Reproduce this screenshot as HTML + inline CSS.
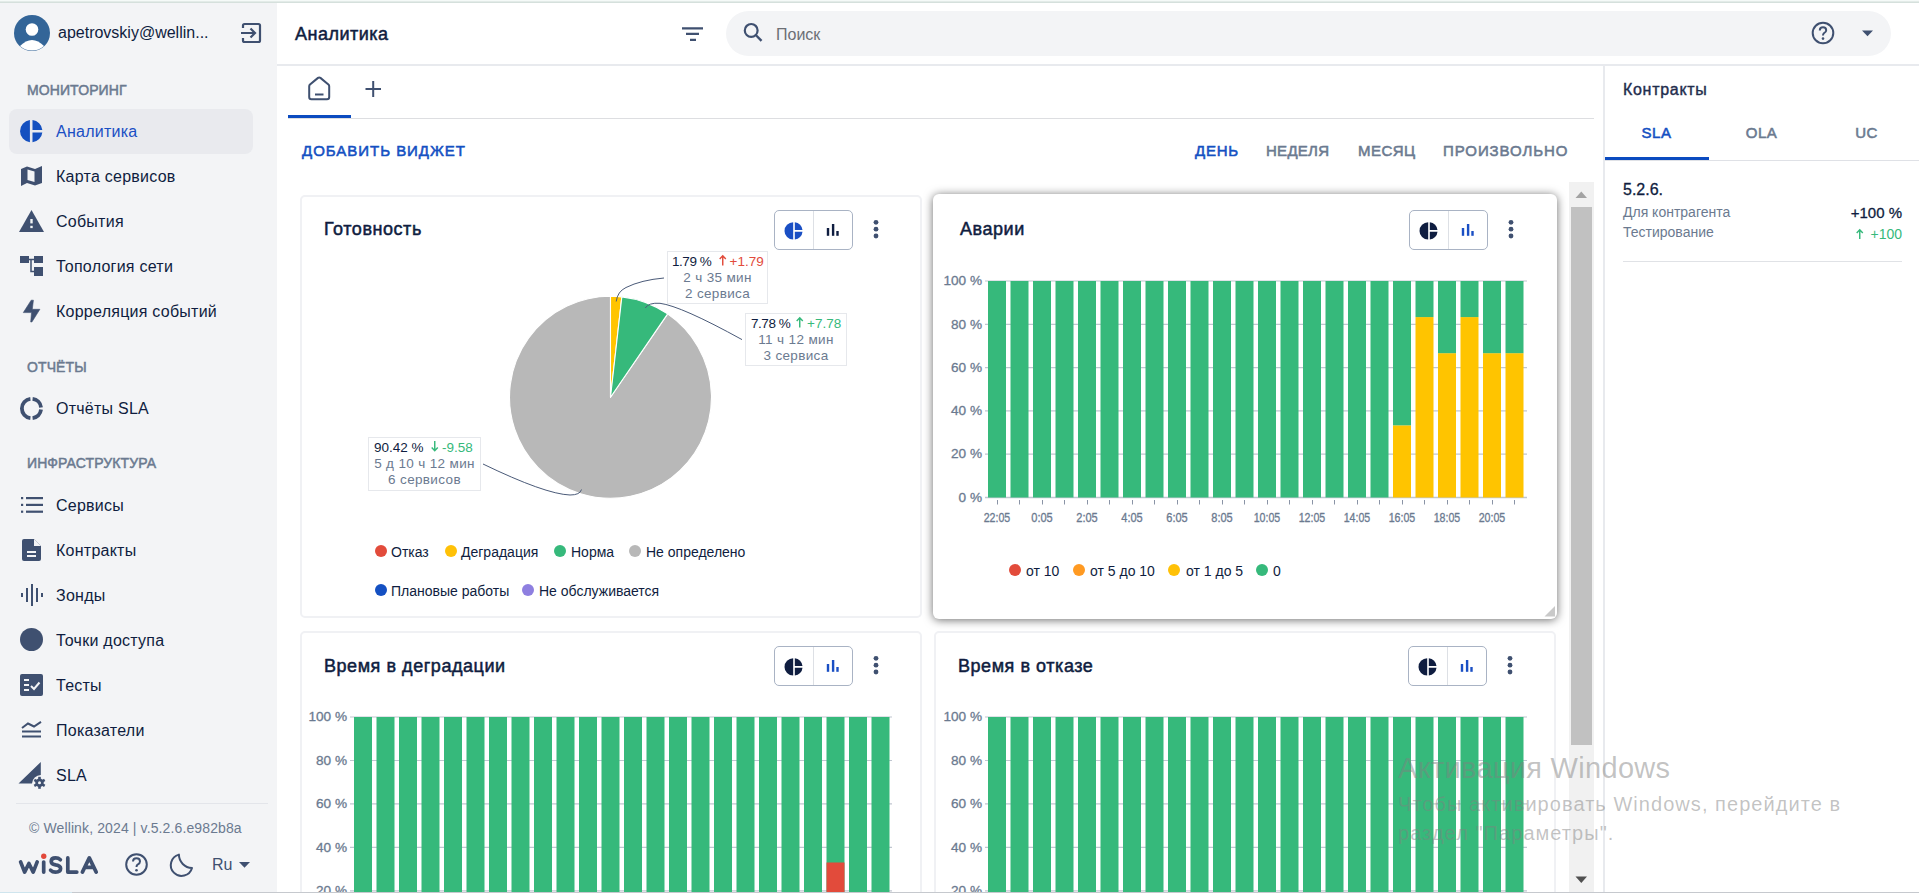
<!DOCTYPE html>
<html><head><meta charset="utf-8">
<style>
*{box-sizing:border-box;margin:0;padding:0}
html,body{width:1919px;height:893px;overflow:hidden;background:#fff;font-family:"Liberation Sans",sans-serif;color:#0f1d40}
.a{position:absolute}
.t{position:absolute;white-space:nowrap;line-height:1}
svg{position:absolute;overflow:visible}
#top{left:0;top:0;width:1919px;height:3px;background:linear-gradient(#f5faf8 0,#f5faf8 1px,#e3ebe8 1px,#e3ebe8 2px,#d5e0dc 2px)}
#side{left:0;top:3px;width:277px;height:890px;background:#f3f4f6}
.nav{font-size:16px;color:#0f1d40;left:56px;letter-spacing:0.25px}
.sec{font-size:14px;font-weight:400;-webkit-text-stroke:0.5px #6b7a90;color:#6b7a90;left:27px;letter-spacing:0.1px}
.ic{fill:#3f5070}
#bottomline{left:0;top:892px;width:1919px;height:1px;background:linear-gradient(90deg,#cfe5ee 0,#cfe5ee 72px,#c6c9ce 72px)}
</style></head><body>
<div id="top" class="a"></div>
<div id="side" class="a"></div>

<!-- sidebar user -->
<svg style="left:14px;top:15px" width="36" height="36" viewBox="0 0 36 36">
  <circle cx="18" cy="18" r="18" fill="#336598"/>
  <circle cx="18" cy="14.5" r="6.3" fill="#fff"/>
  <path d="M6 31 Q18 19 30 31 A18 18 0 0 1 6 31Z" fill="#fff"/>
</svg>
<div class="t" style="left:58px;top:25px;font-size:16px">apetrovskiy@wellin...</div>
<svg style="left:240px;top:22px" width="24" height="22" viewBox="0 0 24 22">
  <path d="M3 6 V3.5 A1.5 1.5 0 0 1 4.5 2 H18.5 A1.5 1.5 0 0 1 20 3.5 V18.5 A1.5 1.5 0 0 1 18.5 20 H4.5 A1.5 1.5 0 0 1 3 18.5 V16" fill="none" stroke="#3f5070" stroke-width="2.2"/>
  <path d="M1 11 H14.5 M10.5 6.5 L15 11 L10.5 15.5" fill="none" stroke="#3f5070" stroke-width="2.2"/>
</svg>

<div class="t sec" style="top:83px">МОНИТОРИНГ</div>
<div class="a" style="left:9px;top:109px;width:244px;height:45px;background:#e9eaee;border-radius:8px"></div>
<svg style="left:20.4px;top:119.8px" width="22.4" height="22.4" viewBox="0 0 22.4 22.4"><path d="M9.9 0.08 A11.2 11.2 0 0 0 9.9 22.32 Z M12.5 0.08 A11.2 11.2 0 0 1 22.34 10.0 H12.5 Z M12.5 12.4 H22.34 A11.2 11.2 0 0 1 12.5 22.32 Z" fill="#1450c0"/></svg>
<div class="t nav" style="top:124px;color:#1a4fc4">Аналитика</div>

<svg style="left:21px;top:166px" width="21" height="20" viewBox="0 0 21 20">
  <path d="M0 3 L6 0.5 L14 3 L21 0 V17 L14 19.5 L6 17 L0 20 Z" fill="#3f5070"/>
  <path d="M6.5 3.5 L13.5 5.5 V16 L6.5 14 Z" fill="#f3f4f6"/>
</svg>
<div class="t nav" style="top:169px">Карта сервисов</div>

<svg style="left:19px;top:210px" width="25" height="22" viewBox="0 0 25 22">
  <path d="M12.5 0 L25 22 H0 Z" fill="#3f5070"/>
  <rect x="11.3" y="9" width="2.4" height="4.4" fill="#f3f4f6"/>
  <rect x="11.3" y="15.8" width="2.4" height="2.3" fill="#f3f4f6"/>
</svg>
<div class="t nav" style="top:214px">События</div>

<svg style="left:20px;top:256px" width="24" height="21" viewBox="0 0 24 21">
  <rect x="0" y="0" width="9" height="7" fill="#3f5070"/>
  <rect x="14" y="0" width="9" height="7" fill="#3f5070"/>
  <rect x="14" y="11" width="9" height="9" fill="#3f5070"/>
  <path d="M9 3.5 H14 M11 3.5 V15.5 H14" fill="none" stroke="#3f5070" stroke-width="1.5"/>
</svg>
<div class="t nav" style="top:259px">Топология сети</div>

<svg style="left:23px;top:300px" width="18" height="23" viewBox="0 0 18 23"><path d="M8.2 0.2 L10.4 0.2 L9.3 9.3 L16.9 9.3 L8.9 22 L7.7 22 L8.5 12.6 L0.3 12.6 Z" fill="#3f5070" stroke="#3f5070" stroke-width="0.6" stroke-linejoin="round"/></svg>
<div class="t nav" style="top:304px">Корреляция событий</div>

<div class="t sec" style="top:360px">ОТЧЁТЫ</div>
<svg style="left:20px;top:397px" width="23" height="23" viewBox="0 0 23 23"><path d="M12.59 1.96 A9.6 9.6 0 0 1 21.04 10.41 M21.04 12.59 A9.6 9.6 0 0 1 12.59 21.04 M10.41 21.04 A9.6 9.6 0 0 1 10.41 1.96" fill="none" stroke="#3f5070" stroke-width="3.8"/></svg>
<div class="t nav" style="top:401px">Отчёты SLA</div>

<div class="t sec" style="top:456px">ИНФРАСТРУКТУРА</div>
<svg style="left:21px;top:497px" width="22" height="16" viewBox="0 0 22 16">
  <g fill="#3f5070">
  <rect x="0" y="0" width="2.2" height="2.2"/><rect x="5" y="0" width="17" height="2.2"/>
  <rect x="0" y="6.8" width="2.2" height="2.2"/><rect x="5" y="6.8" width="17" height="2.2"/>
  <rect x="0" y="13.6" width="2.2" height="2.2"/><rect x="5" y="13.6" width="17" height="2.2"/>
  </g>
</svg>
<div class="t nav" style="top:498px">Сервисы</div>

<svg style="left:22px;top:539px" width="19" height="22" viewBox="0 0 19 22">
  <path d="M2 0 H12 L19 7 V20 A2 2 0 0 1 17 22 H2 A2 2 0 0 1 0 20 V2 A2 2 0 0 1 2 0Z" fill="#3f5070"/>
  <path d="M12 0 V7 H19" fill="#f3f4f6"/>
  <rect x="5" y="12" width="9" height="2" fill="#f3f4f6"/><rect x="5" y="16" width="9" height="2" fill="#f3f4f6"/>
</svg>
<div class="t nav" style="top:543px">Контракты</div>

<svg style="left:21px;top:584px" width="22" height="22" viewBox="0 0 22 22">
  <g fill="#3f5070"><rect x="0" y="9" width="2" height="4"/><rect x="5" y="4" width="2" height="14"/><rect x="10" y="0" width="2" height="22"/><rect x="15" y="4" width="2" height="14"/><rect x="20" y="9" width="2" height="4"/></g>
</svg>
<div class="t nav" style="top:588px">Зонды</div>

<svg style="left:20px;top:628px" width="23" height="23" viewBox="0 0 23 23"><circle cx="11.5" cy="11.5" r="11.5" fill="#3f5070"/></svg>
<div class="t nav" style="top:633px">Точки доступа</div>

<svg style="left:20px;top:674px" width="23" height="22" viewBox="0 0 23 22">
  <rect x="0" y="0" width="23" height="22" rx="2" fill="#3f5070"/>
  <g fill="#f3f4f6"><rect x="4" y="5" width="5" height="2"/><rect x="4" y="10" width="5" height="2"/><rect x="4" y="15" width="5" height="2"/></g>
  <path d="M11 12 L14 15 L19.5 8.5" fill="none" stroke="#f3f4f6" stroke-width="2"/>
</svg>
<div class="t nav" style="top:678px">Тесты</div>

<svg style="left:22px;top:721px" width="19" height="17" viewBox="0 0 19 17">
  <path d="M0 7 L6 2.5 L12 5.5 L19 0.8 M0 10.5 H19 M0 15.5 H19" fill="none" stroke="#3f5070" stroke-width="2"/>
</svg>
<div class="t nav" style="top:723px">Показатели</div>

<svg style="left:18px;top:762px" width="28" height="26" viewBox="0 0 28 26">
  <path d="M0.5 21.5 L22.8 0 V13 A9 9 0 0 0 14 21.5 Z" fill="#3f5070"/>
  <g transform="translate(21.5 20.8)">
    <circle r="4.2" fill="#3f5070"/>
    <g fill="#3f5070"><rect x="-1.3" y="-6" width="2.6" height="12"/><rect x="-1.3" y="-6" width="2.6" height="12" transform="rotate(60)"/><rect x="-1.3" y="-6" width="2.6" height="12" transform="rotate(120)"/></g>
    <circle r="1.5" fill="#f3f4f6"/>
  </g>
</svg>
<div class="t nav" style="top:768px">SLA</div>

<div class="a" style="left:16px;top:803px;width:252px;height:1px;background:#e3e5ea"></div>
<div class="t" style="left:29px;top:821px;font-size:14px;color:#6b7a90;letter-spacing:0.12px">© Wellink, 2024 | v.5.2.6.e982b8a</div>

<!-- bottom bar -->
<svg style="left:18px;top:853px" width="82" height="24" viewBox="0 0 82 24">
  <g fill="none" stroke="#3f5070" stroke-width="3.7" stroke-linecap="round" stroke-linejoin="round">
    <path d="M2.6 8.9 L6.6 19.1 L10.9 10.5 L15.2 19.1 L19.2 8.9"/>
    <path d="M25.7 9 V19.1"/>
    <path d="M42.4 6.8 Q40.5 4.9 37.6 4.9 Q33.2 4.9 33.2 8.4 Q33.2 11 37.6 11.9 Q42.6 12.8 42.6 15.6 Q42.6 19.2 37.5 19.2 Q34.5 19.2 32.6 17.2"/>
    <path d="M49.8 4.9 V19.1 H58.8"/>
    <path d="M64.4 19.1 L71.3 4.9 L78.2 19.1 M67.2 14.3 H75.4"/>
  </g>
  <circle cx="25.75" cy="3.25" r="2.65" fill="#e2483a"/>
</svg>
<svg style="left:125px;top:853px" width="23" height="23" viewBox="0 0 23 23">
  <circle cx="11.5" cy="11.5" r="10.3" fill="none" stroke="#3f5070" stroke-width="2"/>
  <path d="M8 8.6 Q8 5.3 11.5 5.3 Q15 5.3 15 8.6 Q15 10.5 12.6 11.6 Q11.5 12.3 11.5 14" fill="none" stroke="#3f5070" stroke-width="2"/>
  <circle cx="11.5" cy="17.2" r="1.3" fill="#3f5070"/>
</svg>
<svg style="left:169px;top:852px" width="24" height="24" viewBox="0 0 24 24">
  <path d="M9.9 2.6 A10.8 10.8 0 1 0 23 16 A13.5 13.5 0 0 1 9.9 2.6Z" fill="none" stroke="#3f5070" stroke-width="2" stroke-linejoin="round"/>
</svg>
<div class="t" style="left:212px;top:857px;font-size:16px;color:#3f5070">Ru</div>
<svg style="left:239px;top:862px" width="11" height="6" viewBox="0 0 11 6"><path d="M0 0 H11 L5.5 5.8Z" fill="#3f5070"/></svg>

<!-- header -->
<div class="a" style="left:277px;top:64px;width:1642px;height:2px;background:#e8eaee"></div>
<div class="t" style="left:295px;top:25px;font-size:18px;font-weight:400;-webkit-text-stroke:0.5px #0f1d40;letter-spacing:0.5px">Аналитика</div>
<svg style="left:682px;top:27px" width="22" height="15" viewBox="0 0 22 15">
  <path d="M0 1.3 H21 M4 6.9 H17 M8 12.9 H14" stroke="#3f5070" stroke-width="2.2" fill="none"/>
</svg>
<div class="a" style="left:726px;top:11px;width:1165px;height:45px;background:#f3f4f6;border-radius:23px"></div>
<svg style="left:742px;top:22px" width="22" height="22" viewBox="0 0 22 22">
  <circle cx="9.2" cy="8.4" r="6.4" fill="none" stroke="#3f5070" stroke-width="2.2"/>
  <path d="M13.8 13 L19.5 18.8" stroke="#3f5070" stroke-width="2.4"/>
</svg>
<div class="t" style="left:776px;top:27px;font-size:16px;color:#6c6f75">Поиск</div>
<svg style="left:1811px;top:21px" width="24" height="24" viewBox="0 0 24 24">
  <circle cx="12" cy="12" r="10.3" fill="none" stroke="#3f5070" stroke-width="2"/>
  <path d="M8.8 9.4 Q8.8 6.2 12 6.2 Q15.2 6.2 15.2 9.2 Q15.2 11 13 12.2 Q12 12.9 12 14.6" fill="none" stroke="#3f5070" stroke-width="2"/>
  <circle cx="12" cy="17.6" r="1.3" fill="#3f5070"/>
</svg>
<svg style="left:1862px;top:30px" width="12" height="7" viewBox="0 0 12 7"><path d="M0 0.5 H11 L5.5 6.3Z" fill="#3f5070"/></svg>

<svg style="left:308px;top:77px" width="24" height="24" viewBox="0 0 24 24">
<path d="M1.2 9.3 Q1.2 8.3 2 7.6 L10 0.9 Q11.2 0 12.4 0.9 L20.4 7.6 Q21.2 8.3 21.2 9.3 V20 Q21.2 22.2 19 22.2 H3.4 Q1.2 22.2 1.2 20 Z" fill="none" stroke="#3f5070" stroke-width="2"/>
<path d="M7 17.5 H15.5" stroke="#3f5070" stroke-width="2"/>
</svg>
<svg style="left:365px;top:81px" width="17" height="17" viewBox="0 0 17 17">
<path d="M0.5 8 H16 M8.2 0 V16" stroke="#3f5070" stroke-width="2"/>
</svg>
<div class="a" style="left:288px;top:118px;width:1306px;height:1px;background:#dddee1"></div>
<div class="a" style="left:288px;top:115px;width:63px;height:3px;background:#0b4bc0"></div>
<div class="t" style="left:302px;top:143px;font-size:15px;font-weight:400;-webkit-text-stroke:0.55px #1450c2;color:#1450c2;letter-spacing:0.98px">ДОБАВИТЬ ВИДЖЕТ</div>
<div class="t" style="left:1195px;top:143px;font-size:15px;font-weight:400;-webkit-text-stroke:0.55px #1450c2;color:#1450c2;letter-spacing:0.75px">ДЕНЬ</div>
<div class="t" style="left:1266px;top:143px;font-size:15px;font-weight:400;-webkit-text-stroke:0.55px #6b7a90;color:#6b7a90;letter-spacing:0.28px">НЕДЕЛЯ</div>
<div class="t" style="left:1358px;top:143px;font-size:15px;font-weight:400;-webkit-text-stroke:0.55px #6b7a90;color:#6b7a90;letter-spacing:0.45px">МЕСЯЦ</div>
<div class="t" style="left:1443px;top:143px;font-size:15px;font-weight:400;-webkit-text-stroke:0.55px #6b7a90;color:#6b7a90;letter-spacing:0.92px">ПРОИЗВОЛЬНО</div>
<div class="a" style="left:300px;top:195px;width:622px;height:423px;background:#fff;border:2px solid #f0f1f4;border-radius:5px"></div>
<div class="t" style="left:324px;top:220px;font-size:18px;font-weight:400;-webkit-text-stroke:0.5px #0f1d40;color:#0f1d40;letter-spacing:0.55px">Готовность</div>
<div class="a" style="left:774px;top:210px;width:79px;height:40px;border:1px solid #a9b3c4;border-radius:5px"></div>
<div class="a" style="left:813px;top:211px;width:1px;height:38px;background:#dde0e5"></div>
<svg style="left:785px;top:222px" width="18" height="18" viewBox="0 0 18 18">
<path d="M8.2 0.2 A8.6 8.6 0 0 0 8.2 17.6 Z" fill="#1a4fc4"/>
<path d="M9.8 0.2 A8.6 8.6 0 0 1 17.5 8.1 H9.8 Z" fill="#1a4fc4"/>
<path d="M9.8 9.7 H17.5 A8.6 8.6 0 0 1 9.8 17.6 Z" fill="#1a4fc4"/></svg>
<svg style="left:826px;top:224px" width="14" height="13" viewBox="0 0 14 13">
<rect x="0.8" y="4" width="2.4" height="7.8" fill="#0f1d40"/><rect x="5.9" y="0" width="2.4" height="11.8" fill="#0f1d40"/><rect x="10.3" y="7" width="2.4" height="4.8" fill="#0f1d40"/></svg>
<svg style="left:872.5px;top:219px" width="6" height="20" viewBox="0 0 6 20">
<circle cx="3" cy="3.3" r="2.4" fill="#3f5070"/><circle cx="3" cy="10.2" r="2.4" fill="#3f5070"/><circle cx="3" cy="17" r="2.4" fill="#3f5070"/></svg>
<svg style="left:0;top:0" width="1919" height="893" viewBox="0 0 1919 893">
<path d="M610.5 397.2 L667.64 313.92 A101 101 0 1 1 610.50 296.20 Z" fill="#b8b8b8" stroke="#fff" stroke-width="1.1" stroke-linejoin="round"/>
<path d="M610.5 397.2 L610.50 296.20 A101 101 0 0 1 621.84 296.84 Z" fill="#ffc400" stroke="#fff" stroke-width="1.1" stroke-linejoin="round"/>
<path d="M610.5 397.2 L621.84 296.84 A101 101 0 0 1 667.64 313.92 Z" fill="#36b97b" stroke="#fff" stroke-width="1.1" stroke-linejoin="round"/>
<path d="M616.2 301.5 Q617.5 291.5 626 287.5 Q641 280 664 278" fill="none" stroke="#4a5a78" stroke-width="1"/>
<path d="M645.3 308 Q648.5 302.5 660 303.3 Q681 306 742 339.6" fill="none" stroke="#4a5a78" stroke-width="1"/>
<path d="M581.5 489.5 Q580 495 570 495 Q545 494 483 464" fill="none" stroke="#4a5a78" stroke-width="1"/>
</svg>
<div class="a" style="left:667px;top:251px;width:101px;height:53px;background:#fff;border:1px solid #e6e8ec"></div>
<div class="t" style="left:672px;top:255px;font-size:13.5px;color:#0f1d40;letter-spacing:-0.45px">1.79 %</div>
<svg style="left:718.5px;top:255px" width="7.5" height="10.5" viewBox="0 0 7.5 10.5"><path d="M3.75 10.5 V1 M0.7 3.9 L3.75 0.8 L6.8 3.9" fill="none" stroke="#e24b3b" stroke-width="1.45"/></svg>
<div class="t" style="left:729.5px;top:255px;font-size:13.5px;color:#e24b3b">+1.79</div>
<div class="t" style="left:667px;width:101px;text-align:center;top:271px;font-size:13.5px;color:#6b7a90;letter-spacing:0.35px">2 ч 35 мин</div>
<div class="t" style="left:667px;width:101px;text-align:center;top:287px;font-size:13.5px;color:#6b7a90;letter-spacing:0.35px">2 сервиса</div>
<div class="a" style="left:745px;top:313px;width:102px;height:53px;background:#fff;border:1px solid #e6e8ec"></div>
<div class="t" style="left:751px;top:317px;font-size:13.5px;color:#0f1d40;letter-spacing:-0.45px">7.78 %</div>
<svg style="left:796.3px;top:317px" width="7.5" height="10.5" viewBox="0 0 7.5 10.5"><path d="M3.75 10.5 V1 M0.7 3.9 L3.75 0.8 L6.8 3.9" fill="none" stroke="#36b97b" stroke-width="1.45"/></svg>
<div class="t" style="left:807px;top:317px;font-size:13.5px;color:#36b97b">+7.78</div>
<div class="t" style="left:745px;width:102px;text-align:center;top:333px;font-size:13.5px;color:#6b7a90;letter-spacing:0.35px">11 ч 12 мин</div>
<div class="t" style="left:745px;width:102px;text-align:center;top:349px;font-size:13.5px;color:#6b7a90;letter-spacing:0.35px">3 сервиса</div>
<div class="a" style="left:368px;top:437px;width:113px;height:54px;background:#fff;border:1px solid #e6e8ec"></div>
<div class="t" style="left:374px;top:441px;font-size:13.5px;color:#0f1d40;letter-spacing:0px">90.42 %</div>
<svg style="left:431.2px;top:441px" width="7.5" height="10.5" viewBox="0 0 7.5 10.5"><path d="M3.75 0 V9.5 M0.7 6.6 L3.75 9.7 L6.8 6.6" fill="none" stroke="#36b97b" stroke-width="1.45"/></svg>
<div class="t" style="left:442px;top:441px;font-size:13.5px;color:#36b97b">-9.58</div>
<div class="t" style="left:368px;width:113px;text-align:center;top:457px;font-size:13.5px;color:#6b7a90;letter-spacing:0.35px">5 д 10 ч 12 мин</div>
<div class="t" style="left:368px;width:113px;text-align:center;top:473px;font-size:13.5px;color:#6b7a90;letter-spacing:0.35px">6 сервисов</div>
<div class="a" style="left:374.5px;top:545px;width:12px;height:12px;border-radius:50%;background:#e24b3b"></div>
<div class="t" style="left:391px;top:545px;font-size:14px;color:#0f1d40">Отказ</div>
<div class="a" style="left:444.5px;top:545px;width:12px;height:12px;border-radius:50%;background:#ffc107"></div>
<div class="t" style="left:461px;top:545px;font-size:14px;color:#0f1d40">Деградация</div>
<div class="a" style="left:554px;top:545px;width:12px;height:12px;border-radius:50%;background:#36b97b"></div>
<div class="t" style="left:571px;top:545px;font-size:14px;color:#0f1d40">Норма</div>
<div class="a" style="left:628.5px;top:545px;width:12px;height:12px;border-radius:50%;background:#b8b8b8"></div>
<div class="t" style="left:646px;top:545px;font-size:14px;color:#0f1d40">Не определено</div>
<div class="a" style="left:374.5px;top:583.5px;width:12px;height:12px;border-radius:50%;background:#1450c2"></div>
<div class="t" style="left:391px;top:583.5px;font-size:14px;color:#0f1d40">Плановые работы</div>
<div class="a" style="left:522px;top:583.5px;width:12px;height:12px;border-radius:50%;background:#8e7fe0"></div>
<div class="t" style="left:539px;top:583.5px;font-size:14px;color:#0f1d40">Не обслуживается</div>
<div class="a" style="left:933px;top:194px;width:624px;height:425px;background:#fff;border-radius:6px;box-shadow:0 1px 10px rgba(0,0,0,0.58)"></div>
<div class="t" style="left:960px;top:220px;font-size:18px;font-weight:400;-webkit-text-stroke:0.5px #0f1d40;color:#0f1d40;letter-spacing:0.55px">Аварии</div>
<div class="a" style="left:1409px;top:210px;width:79px;height:40px;border:1px solid #a9b3c4;border-radius:5px"></div>
<div class="a" style="left:1448px;top:211px;width:1px;height:38px;background:#dde0e5"></div>
<svg style="left:1420px;top:222px" width="18" height="18" viewBox="0 0 18 18">
<path d="M8.2 0.2 A8.6 8.6 0 0 0 8.2 17.6 Z" fill="#0f1d40"/>
<path d="M9.8 0.2 A8.6 8.6 0 0 1 17.5 8.1 H9.8 Z" fill="#0f1d40"/>
<path d="M9.8 9.7 H17.5 A8.6 8.6 0 0 1 9.8 17.6 Z" fill="#0f1d40"/></svg>
<svg style="left:1461px;top:224px" width="14" height="13" viewBox="0 0 14 13">
<rect x="0.8" y="4" width="2.4" height="7.8" fill="#1a4fc4"/><rect x="5.9" y="0" width="2.4" height="11.8" fill="#1a4fc4"/><rect x="10.3" y="7" width="2.4" height="4.8" fill="#1a4fc4"/></svg>
<svg style="left:1507.5px;top:219px" width="6" height="20" viewBox="0 0 6 20">
<circle cx="3" cy="3.3" r="2.4" fill="#3f5070"/><circle cx="3" cy="10.2" r="2.4" fill="#3f5070"/><circle cx="3" cy="17" r="2.4" fill="#3f5070"/></svg>
<svg style="left:0;top:0" width="1919" height="893" viewBox="0 0 1919 893">
<line x1="985" y1="281.0" x2="1527" y2="281.0" stroke="#c0c6d0" stroke-width="1.2"/>
<line x1="985" y1="324.3" x2="1527" y2="324.3" stroke="#c0c6d0" stroke-width="1.2"/>
<line x1="985" y1="367.6" x2="1527" y2="367.6" stroke="#c0c6d0" stroke-width="1.2"/>
<line x1="985" y1="410.9" x2="1527" y2="410.9" stroke="#c0c6d0" stroke-width="1.2"/>
<line x1="985" y1="454.2" x2="1527" y2="454.2" stroke="#c0c6d0" stroke-width="1.2"/>
<line x1="985" y1="497.5" x2="1527" y2="497.5" stroke="#c0c6d0" stroke-width="1.5"/>
<rect x="988.00" y="281.00" width="18" height="216.50" fill="#36b97b"/>
<rect x="1010.50" y="281.00" width="18" height="216.50" fill="#36b97b"/>
<rect x="1033.00" y="281.00" width="18" height="216.50" fill="#36b97b"/>
<rect x="1055.50" y="281.00" width="18" height="216.50" fill="#36b97b"/>
<rect x="1078.00" y="281.00" width="18" height="216.50" fill="#36b97b"/>
<rect x="1100.50" y="281.00" width="18" height="216.50" fill="#36b97b"/>
<rect x="1123.00" y="281.00" width="18" height="216.50" fill="#36b97b"/>
<rect x="1145.50" y="281.00" width="18" height="216.50" fill="#36b97b"/>
<rect x="1168.00" y="281.00" width="18" height="216.50" fill="#36b97b"/>
<rect x="1190.50" y="281.00" width="18" height="216.50" fill="#36b97b"/>
<rect x="1213.00" y="281.00" width="18" height="216.50" fill="#36b97b"/>
<rect x="1235.50" y="281.00" width="18" height="216.50" fill="#36b97b"/>
<rect x="1258.00" y="281.00" width="18" height="216.50" fill="#36b97b"/>
<rect x="1280.50" y="281.00" width="18" height="216.50" fill="#36b97b"/>
<rect x="1303.00" y="281.00" width="18" height="216.50" fill="#36b97b"/>
<rect x="1325.50" y="281.00" width="18" height="216.50" fill="#36b97b"/>
<rect x="1348.00" y="281.00" width="18" height="216.50" fill="#36b97b"/>
<rect x="1370.50" y="281.00" width="18" height="216.50" fill="#36b97b"/>
<rect x="1393.00" y="425.33" width="18" height="72.17" fill="#ffc400"/>
<rect x="1393.00" y="281.00" width="18" height="144.33" fill="#36b97b"/>
<rect x="1415.50" y="317.08" width="18" height="180.42" fill="#ffc400"/>
<rect x="1415.50" y="281.00" width="18" height="36.08" fill="#36b97b"/>
<rect x="1438.00" y="353.17" width="18" height="144.33" fill="#ffc400"/>
<rect x="1438.00" y="281.00" width="18" height="72.17" fill="#36b97b"/>
<rect x="1460.50" y="317.08" width="18" height="180.42" fill="#ffc400"/>
<rect x="1460.50" y="281.00" width="18" height="36.08" fill="#36b97b"/>
<rect x="1483.00" y="353.17" width="18" height="144.33" fill="#ffc400"/>
<rect x="1483.00" y="281.00" width="18" height="72.17" fill="#36b97b"/>
<rect x="1505.50" y="353.17" width="18" height="144.33" fill="#ffc400"/>
<rect x="1505.50" y="281.00" width="18" height="72.17" fill="#36b97b"/>
<line x1="997.5" y1="500.0" x2="997.5" y2="504.5" stroke="#8a94a6" stroke-width="1"/>
<line x1="1019.5" y1="500.0" x2="1019.5" y2="504.5" stroke="#8a94a6" stroke-width="1"/>
<line x1="1042.5" y1="500.0" x2="1042.5" y2="504.5" stroke="#8a94a6" stroke-width="1"/>
<line x1="1064.5" y1="500.0" x2="1064.5" y2="504.5" stroke="#8a94a6" stroke-width="1"/>
<line x1="1087.5" y1="500.0" x2="1087.5" y2="504.5" stroke="#8a94a6" stroke-width="1"/>
<line x1="1109.5" y1="500.0" x2="1109.5" y2="504.5" stroke="#8a94a6" stroke-width="1"/>
<line x1="1132.5" y1="500.0" x2="1132.5" y2="504.5" stroke="#8a94a6" stroke-width="1"/>
<line x1="1154.5" y1="500.0" x2="1154.5" y2="504.5" stroke="#8a94a6" stroke-width="1"/>
<line x1="1177.5" y1="500.0" x2="1177.5" y2="504.5" stroke="#8a94a6" stroke-width="1"/>
<line x1="1199.5" y1="500.0" x2="1199.5" y2="504.5" stroke="#8a94a6" stroke-width="1"/>
<line x1="1222.5" y1="500.0" x2="1222.5" y2="504.5" stroke="#8a94a6" stroke-width="1"/>
<line x1="1244.5" y1="500.0" x2="1244.5" y2="504.5" stroke="#8a94a6" stroke-width="1"/>
<line x1="1267.5" y1="500.0" x2="1267.5" y2="504.5" stroke="#8a94a6" stroke-width="1"/>
<line x1="1289.5" y1="500.0" x2="1289.5" y2="504.5" stroke="#8a94a6" stroke-width="1"/>
<line x1="1312.5" y1="500.0" x2="1312.5" y2="504.5" stroke="#8a94a6" stroke-width="1"/>
<line x1="1334.5" y1="500.0" x2="1334.5" y2="504.5" stroke="#8a94a6" stroke-width="1"/>
<line x1="1357.5" y1="500.0" x2="1357.5" y2="504.5" stroke="#8a94a6" stroke-width="1"/>
<line x1="1379.5" y1="500.0" x2="1379.5" y2="504.5" stroke="#8a94a6" stroke-width="1"/>
<line x1="1402.5" y1="500.0" x2="1402.5" y2="504.5" stroke="#8a94a6" stroke-width="1"/>
<line x1="1424.5" y1="500.0" x2="1424.5" y2="504.5" stroke="#8a94a6" stroke-width="1"/>
<line x1="1447.5" y1="500.0" x2="1447.5" y2="504.5" stroke="#8a94a6" stroke-width="1"/>
<line x1="1469.5" y1="500.0" x2="1469.5" y2="504.5" stroke="#8a94a6" stroke-width="1"/>
<line x1="1492.5" y1="500.0" x2="1492.5" y2="504.5" stroke="#8a94a6" stroke-width="1"/>
<line x1="1514.5" y1="500.0" x2="1514.5" y2="504.5" stroke="#8a94a6" stroke-width="1"/>
<text x="997.0" y="521.5" text-anchor="middle" font-family="Liberation Sans" font-size="13.5" fill="#6b7a90" stroke="#6b7a90" stroke-width="0.35" textLength="26.6" lengthAdjust="spacingAndGlyphs">22:05</text>
<text x="1042.0" y="521.5" text-anchor="middle" font-family="Liberation Sans" font-size="13.5" fill="#6b7a90" stroke="#6b7a90" stroke-width="0.35" textLength="21.5" lengthAdjust="spacingAndGlyphs">0:05</text>
<text x="1087.0" y="521.5" text-anchor="middle" font-family="Liberation Sans" font-size="13.5" fill="#6b7a90" stroke="#6b7a90" stroke-width="0.35" textLength="21.5" lengthAdjust="spacingAndGlyphs">2:05</text>
<text x="1132.0" y="521.5" text-anchor="middle" font-family="Liberation Sans" font-size="13.5" fill="#6b7a90" stroke="#6b7a90" stroke-width="0.35" textLength="21.5" lengthAdjust="spacingAndGlyphs">4:05</text>
<text x="1177.0" y="521.5" text-anchor="middle" font-family="Liberation Sans" font-size="13.5" fill="#6b7a90" stroke="#6b7a90" stroke-width="0.35" textLength="21.5" lengthAdjust="spacingAndGlyphs">6:05</text>
<text x="1222.0" y="521.5" text-anchor="middle" font-family="Liberation Sans" font-size="13.5" fill="#6b7a90" stroke="#6b7a90" stroke-width="0.35" textLength="21.5" lengthAdjust="spacingAndGlyphs">8:05</text>
<text x="1267.0" y="521.5" text-anchor="middle" font-family="Liberation Sans" font-size="13.5" fill="#6b7a90" stroke="#6b7a90" stroke-width="0.35" textLength="26.6" lengthAdjust="spacingAndGlyphs">10:05</text>
<text x="1312.0" y="521.5" text-anchor="middle" font-family="Liberation Sans" font-size="13.5" fill="#6b7a90" stroke="#6b7a90" stroke-width="0.35" textLength="26.6" lengthAdjust="spacingAndGlyphs">12:05</text>
<text x="1357.0" y="521.5" text-anchor="middle" font-family="Liberation Sans" font-size="13.5" fill="#6b7a90" stroke="#6b7a90" stroke-width="0.35" textLength="26.6" lengthAdjust="spacingAndGlyphs">14:05</text>
<text x="1402.0" y="521.5" text-anchor="middle" font-family="Liberation Sans" font-size="13.5" fill="#6b7a90" stroke="#6b7a90" stroke-width="0.35" textLength="26.6" lengthAdjust="spacingAndGlyphs">16:05</text>
<text x="1447.0" y="521.5" text-anchor="middle" font-family="Liberation Sans" font-size="13.5" fill="#6b7a90" stroke="#6b7a90" stroke-width="0.35" textLength="26.6" lengthAdjust="spacingAndGlyphs">18:05</text>
<text x="1492.0" y="521.5" text-anchor="middle" font-family="Liberation Sans" font-size="13.5" fill="#6b7a90" stroke="#6b7a90" stroke-width="0.35" textLength="26.6" lengthAdjust="spacingAndGlyphs">20:05</text>
<text x="982" y="285.2" text-anchor="end" font-family="Liberation Sans" font-size="13.6" fill="#6b7a90" stroke="#6b7a90" stroke-width="0.3">100 %</text>
<text x="982" y="328.5" text-anchor="end" font-family="Liberation Sans" font-size="13.6" fill="#6b7a90" stroke="#6b7a90" stroke-width="0.3">80 %</text>
<text x="982" y="371.8" text-anchor="end" font-family="Liberation Sans" font-size="13.6" fill="#6b7a90" stroke="#6b7a90" stroke-width="0.3">60 %</text>
<text x="982" y="415.1" text-anchor="end" font-family="Liberation Sans" font-size="13.6" fill="#6b7a90" stroke="#6b7a90" stroke-width="0.3">40 %</text>
<text x="982" y="458.4" text-anchor="end" font-family="Liberation Sans" font-size="13.6" fill="#6b7a90" stroke="#6b7a90" stroke-width="0.3">20 %</text>
<text x="982" y="501.7" text-anchor="end" font-family="Liberation Sans" font-size="13.6" fill="#6b7a90" stroke="#6b7a90" stroke-width="0.3">0 %</text>
</svg>
<svg style="left:1544px;top:606px" width="12" height="11" viewBox="0 0 12 11"><path d="M11 0 V10.5 H0.5 Z" fill="#c9c9c9"/></svg>
<div class="a" style="left:1008.5px;top:564px;width:12px;height:12px;border-radius:50%;background:#e24b3b"></div>
<div class="t" style="left:1026px;top:564px;font-size:14px;color:#0f1d40">от 10</div>
<div class="a" style="left:1072.5px;top:564px;width:12px;height:12px;border-radius:50%;background:#ff9a22"></div>
<div class="t" style="left:1090px;top:564px;font-size:14px;color:#0f1d40">от 5 до 10</div>
<div class="a" style="left:1168px;top:564px;width:12px;height:12px;border-radius:50%;background:#ffc107"></div>
<div class="t" style="left:1186px;top:564px;font-size:14px;color:#0f1d40">от 1 до 5</div>
<div class="a" style="left:1256px;top:564px;width:12px;height:12px;border-radius:50%;background:#36b97b"></div>
<div class="t" style="left:1273px;top:564px;font-size:14px;color:#0f1d40">0</div>
<div class="a" style="left:300px;top:631px;width:622px;height:300px;background:#fff;border:2px solid #f0f1f4;border-radius:5px"></div>
<div class="t" style="left:324px;top:657px;font-size:18px;font-weight:400;-webkit-text-stroke:0.5px #0f1d40;color:#0f1d40;letter-spacing:0.55px">Время в деградации</div>
<div class="a" style="left:774px;top:646px;width:79px;height:40px;border:1px solid #a9b3c4;border-radius:5px"></div>
<div class="a" style="left:813px;top:647px;width:1px;height:38px;background:#dde0e5"></div>
<svg style="left:785px;top:658px" width="18" height="18" viewBox="0 0 18 18">
<path d="M8.2 0.2 A8.6 8.6 0 0 0 8.2 17.6 Z" fill="#0f1d40"/>
<path d="M9.8 0.2 A8.6 8.6 0 0 1 17.5 8.1 H9.8 Z" fill="#0f1d40"/>
<path d="M9.8 9.7 H17.5 A8.6 8.6 0 0 1 9.8 17.6 Z" fill="#0f1d40"/></svg>
<svg style="left:826px;top:660px" width="14" height="13" viewBox="0 0 14 13">
<rect x="0.8" y="4" width="2.4" height="7.8" fill="#1a4fc4"/><rect x="5.9" y="0" width="2.4" height="11.8" fill="#1a4fc4"/><rect x="10.3" y="7" width="2.4" height="4.8" fill="#1a4fc4"/></svg>
<svg style="left:872.5px;top:655px" width="6" height="20" viewBox="0 0 6 20">
<circle cx="3" cy="3.3" r="2.4" fill="#3f5070"/><circle cx="3" cy="10.2" r="2.4" fill="#3f5070"/><circle cx="3" cy="17" r="2.4" fill="#3f5070"/></svg>
<svg style="left:0;top:0" width="1919" height="893" viewBox="0 0 1919 893">
<line x1="350" y1="717.0" x2="892" y2="717.0" stroke="#c0c6d0" stroke-width="1.2"/>
<line x1="350" y1="760.5" x2="892" y2="760.5" stroke="#c0c6d0" stroke-width="1.2"/>
<line x1="350" y1="803.9" x2="892" y2="803.9" stroke="#c0c6d0" stroke-width="1.2"/>
<line x1="350" y1="847.4" x2="892" y2="847.4" stroke="#c0c6d0" stroke-width="1.2"/>
<line x1="350" y1="890.8" x2="892" y2="890.8" stroke="#c0c6d0" stroke-width="1.2"/>
<line x1="350" y1="934.2" x2="892" y2="934.2" stroke="#c0c6d0" stroke-width="1.5"/>
<rect x="354.00" y="717.00" width="18" height="217.25" fill="#36b97b"/>
<rect x="376.50" y="717.00" width="18" height="217.25" fill="#36b97b"/>
<rect x="399.00" y="717.00" width="18" height="217.25" fill="#36b97b"/>
<rect x="421.50" y="717.00" width="18" height="217.25" fill="#36b97b"/>
<rect x="444.00" y="717.00" width="18" height="217.25" fill="#36b97b"/>
<rect x="466.50" y="717.00" width="18" height="217.25" fill="#36b97b"/>
<rect x="489.00" y="717.00" width="18" height="217.25" fill="#36b97b"/>
<rect x="511.50" y="717.00" width="18" height="217.25" fill="#36b97b"/>
<rect x="534.00" y="717.00" width="18" height="217.25" fill="#36b97b"/>
<rect x="556.50" y="717.00" width="18" height="217.25" fill="#36b97b"/>
<rect x="579.00" y="717.00" width="18" height="217.25" fill="#36b97b"/>
<rect x="601.50" y="717.00" width="18" height="217.25" fill="#36b97b"/>
<rect x="624.00" y="717.00" width="18" height="217.25" fill="#36b97b"/>
<rect x="646.50" y="717.00" width="18" height="217.25" fill="#36b97b"/>
<rect x="669.00" y="717.00" width="18" height="217.25" fill="#36b97b"/>
<rect x="691.50" y="717.00" width="18" height="217.25" fill="#36b97b"/>
<rect x="714.00" y="717.00" width="18" height="217.25" fill="#36b97b"/>
<rect x="736.50" y="717.00" width="18" height="217.25" fill="#36b97b"/>
<rect x="759.00" y="717.00" width="18" height="217.25" fill="#36b97b"/>
<rect x="781.50" y="717.00" width="18" height="217.25" fill="#36b97b"/>
<rect x="804.00" y="717.00" width="18" height="217.25" fill="#36b97b"/>
<rect x="826.50" y="934.25" width="18" height="0.00" fill="#e24b3b"/>
<rect x="826.50" y="717.00" width="18" height="217.25" fill="#36b97b"/>
<rect x="849.00" y="717.00" width="18" height="217.25" fill="#36b97b"/>
<rect x="871.50" y="717.00" width="18" height="217.25" fill="#36b97b"/>
<text x="347" y="721.2" text-anchor="end" font-family="Liberation Sans" font-size="13.6" fill="#6b7a90" stroke="#6b7a90" stroke-width="0.3">100 %</text>
<text x="347" y="764.7" text-anchor="end" font-family="Liberation Sans" font-size="13.6" fill="#6b7a90" stroke="#6b7a90" stroke-width="0.3">80 %</text>
<text x="347" y="808.1" text-anchor="end" font-family="Liberation Sans" font-size="13.6" fill="#6b7a90" stroke="#6b7a90" stroke-width="0.3">60 %</text>
<text x="347" y="851.6" text-anchor="end" font-family="Liberation Sans" font-size="13.6" fill="#6b7a90" stroke="#6b7a90" stroke-width="0.3">40 %</text>
<text x="347" y="895.0" text-anchor="end" font-family="Liberation Sans" font-size="13.6" fill="#6b7a90" stroke="#6b7a90" stroke-width="0.3">20 %</text>
<text x="347" y="938.5" text-anchor="end" font-family="Liberation Sans" font-size="13.6" fill="#6b7a90" stroke="#6b7a90" stroke-width="0.3">0 %</text>
</svg>
<svg style="left:0;top:0" width="1919" height="893"><rect x="826.50" y="862.5" width="18" height="40" fill="#e24b3b"/></svg>
<div class="a" style="left:934px;top:631px;width:622px;height:300px;background:#fff;border:2px solid #f0f1f4;border-radius:5px"></div>
<div class="t" style="left:958px;top:657px;font-size:18px;font-weight:400;-webkit-text-stroke:0.5px #0f1d40;color:#0f1d40;letter-spacing:0.55px">Время в отказе</div>
<div class="a" style="left:1408px;top:646px;width:79px;height:40px;border:1px solid #a9b3c4;border-radius:5px"></div>
<div class="a" style="left:1447px;top:647px;width:1px;height:38px;background:#dde0e5"></div>
<svg style="left:1419px;top:658px" width="18" height="18" viewBox="0 0 18 18">
<path d="M8.2 0.2 A8.6 8.6 0 0 0 8.2 17.6 Z" fill="#0f1d40"/>
<path d="M9.8 0.2 A8.6 8.6 0 0 1 17.5 8.1 H9.8 Z" fill="#0f1d40"/>
<path d="M9.8 9.7 H17.5 A8.6 8.6 0 0 1 9.8 17.6 Z" fill="#0f1d40"/></svg>
<svg style="left:1460px;top:660px" width="14" height="13" viewBox="0 0 14 13">
<rect x="0.8" y="4" width="2.4" height="7.8" fill="#1a4fc4"/><rect x="5.9" y="0" width="2.4" height="11.8" fill="#1a4fc4"/><rect x="10.3" y="7" width="2.4" height="4.8" fill="#1a4fc4"/></svg>
<svg style="left:1506.5px;top:655px" width="6" height="20" viewBox="0 0 6 20">
<circle cx="3" cy="3.3" r="2.4" fill="#3f5070"/><circle cx="3" cy="10.2" r="2.4" fill="#3f5070"/><circle cx="3" cy="17" r="2.4" fill="#3f5070"/></svg>
<svg style="left:0;top:0" width="1919" height="893" viewBox="0 0 1919 893">
<line x1="985" y1="717.0" x2="1527" y2="717.0" stroke="#c0c6d0" stroke-width="1.2"/>
<line x1="985" y1="760.5" x2="1527" y2="760.5" stroke="#c0c6d0" stroke-width="1.2"/>
<line x1="985" y1="803.9" x2="1527" y2="803.9" stroke="#c0c6d0" stroke-width="1.2"/>
<line x1="985" y1="847.4" x2="1527" y2="847.4" stroke="#c0c6d0" stroke-width="1.2"/>
<line x1="985" y1="890.8" x2="1527" y2="890.8" stroke="#c0c6d0" stroke-width="1.2"/>
<line x1="985" y1="934.2" x2="1527" y2="934.2" stroke="#c0c6d0" stroke-width="1.5"/>
<rect x="988.00" y="717.00" width="18" height="217.25" fill="#36b97b"/>
<rect x="1010.50" y="717.00" width="18" height="217.25" fill="#36b97b"/>
<rect x="1033.00" y="717.00" width="18" height="217.25" fill="#36b97b"/>
<rect x="1055.50" y="717.00" width="18" height="217.25" fill="#36b97b"/>
<rect x="1078.00" y="717.00" width="18" height="217.25" fill="#36b97b"/>
<rect x="1100.50" y="717.00" width="18" height="217.25" fill="#36b97b"/>
<rect x="1123.00" y="717.00" width="18" height="217.25" fill="#36b97b"/>
<rect x="1145.50" y="717.00" width="18" height="217.25" fill="#36b97b"/>
<rect x="1168.00" y="717.00" width="18" height="217.25" fill="#36b97b"/>
<rect x="1190.50" y="717.00" width="18" height="217.25" fill="#36b97b"/>
<rect x="1213.00" y="717.00" width="18" height="217.25" fill="#36b97b"/>
<rect x="1235.50" y="717.00" width="18" height="217.25" fill="#36b97b"/>
<rect x="1258.00" y="717.00" width="18" height="217.25" fill="#36b97b"/>
<rect x="1280.50" y="717.00" width="18" height="217.25" fill="#36b97b"/>
<rect x="1303.00" y="717.00" width="18" height="217.25" fill="#36b97b"/>
<rect x="1325.50" y="717.00" width="18" height="217.25" fill="#36b97b"/>
<rect x="1348.00" y="717.00" width="18" height="217.25" fill="#36b97b"/>
<rect x="1370.50" y="717.00" width="18" height="217.25" fill="#36b97b"/>
<rect x="1393.00" y="717.00" width="18" height="217.25" fill="#36b97b"/>
<rect x="1415.50" y="717.00" width="18" height="217.25" fill="#36b97b"/>
<rect x="1438.00" y="717.00" width="18" height="217.25" fill="#36b97b"/>
<rect x="1460.50" y="717.00" width="18" height="217.25" fill="#36b97b"/>
<rect x="1483.00" y="717.00" width="18" height="217.25" fill="#36b97b"/>
<rect x="1505.50" y="717.00" width="18" height="217.25" fill="#36b97b"/>
<text x="982" y="721.2" text-anchor="end" font-family="Liberation Sans" font-size="13.6" fill="#6b7a90" stroke="#6b7a90" stroke-width="0.3">100 %</text>
<text x="982" y="764.7" text-anchor="end" font-family="Liberation Sans" font-size="13.6" fill="#6b7a90" stroke="#6b7a90" stroke-width="0.3">80 %</text>
<text x="982" y="808.1" text-anchor="end" font-family="Liberation Sans" font-size="13.6" fill="#6b7a90" stroke="#6b7a90" stroke-width="0.3">60 %</text>
<text x="982" y="851.6" text-anchor="end" font-family="Liberation Sans" font-size="13.6" fill="#6b7a90" stroke="#6b7a90" stroke-width="0.3">40 %</text>
<text x="982" y="895.0" text-anchor="end" font-family="Liberation Sans" font-size="13.6" fill="#6b7a90" stroke="#6b7a90" stroke-width="0.3">20 %</text>
<text x="982" y="938.5" text-anchor="end" font-family="Liberation Sans" font-size="13.6" fill="#6b7a90" stroke="#6b7a90" stroke-width="0.3">0 %</text>
</svg>
<div class="a" style="left:1569px;top:182px;width:25px;height:711px;background:#f1f1f1"></div>
<div class="a" style="left:1571px;top:207px;width:21px;height:538px;background:#c1c1c1"></div>
<svg style="left:1575px;top:191px" width="13" height="8" viewBox="0 0 13 8"><path d="M0.5 7 L6.3 0.5 L12 7Z" fill="#a3a3a3"/></svg>
<svg style="left:1575px;top:876px" width="13" height="8" viewBox="0 0 13 8"><path d="M0.5 0.5 H12 L6.3 7Z" fill="#505050"/></svg>
<div class="a" style="left:1603px;top:66px;width:316px;height:827px;background:#fff;border-left:2px solid #e8eaee"></div>
<div class="t" style="left:1623px;top:82px;font-size:16px;font-weight:400;-webkit-text-stroke:0.4px #1f2d4d;color:#1f2d4d;letter-spacing:0.7px">Контракты</div>
<div class="t" style="left:1604px;width:105px;text-align:center;top:125px;font-size:15px;font-weight:400;-webkit-text-stroke:0.55px #1450c2;color:#1450c2;letter-spacing:0.5px">SLA</div>
<div class="t" style="left:1709px;width:105px;text-align:center;top:125px;font-size:15px;font-weight:400;-webkit-text-stroke:0.55px #6b7a90;color:#6b7a90;letter-spacing:0.5px">OLA</div>
<div class="t" style="left:1814px;width:105px;text-align:center;top:125px;font-size:15px;font-weight:400;-webkit-text-stroke:0.55px #6b7a90;color:#6b7a90;letter-spacing:0.5px">UC</div>
<div class="a" style="left:1605px;top:160px;width:314px;height:1px;background:#dfe1e6"></div>
<div class="a" style="left:1605px;top:157px;width:104px;height:3px;background:#0b4bc0"></div>
<div class="t" style="left:1623px;top:182px;font-size:16px;color:#0f1d40;-webkit-text-stroke:0.3px #0f1d40">5.2.6.</div>
<div class="t" style="left:1623px;top:205px;font-size:14px;color:#6b7a90">Для контрагента</div>
<div class="t" style="left:1623px;top:225px;font-size:14px;color:#6b7a90">Тестирование</div>
<div class="t" style="right:17px;top:205px;font-size:15px;color:#0f1d40;-webkit-text-stroke:0.3px #0f1d40">+100 %</div>
<div class="t" style="right:17px;top:227px;font-size:14px;color:#36b97b">+100</div>
<svg style="left:1855.5px;top:229px" width="7.5" height="10" viewBox="0 0 7.5 10"><path d="M3.75 10 V1 M0.7 3.9 L3.75 0.8 L6.8 3.9" fill="none" stroke="#36b97b" stroke-width="1.45"/></svg>
<div class="a" style="left:1623px;top:261px;width:279px;height:1px;background:#e0e2e6"></div>
<div class="t" style="left:1398px;top:754px;font-size:29px;color:rgba(128,128,128,0.47);letter-spacing:0.3px">Активация Windows</div>
<div class="t" style="left:1398px;top:793.5px;font-size:20px;color:rgba(128,128,128,0.47);letter-spacing:1.05px">Чтобы активировать Windows, перейдите в</div>
<div class="t" style="left:1398px;top:822.5px;font-size:20px;color:rgba(128,128,128,0.47);letter-spacing:1.05px">раздел "Параметры".</div>
<div id="bottomline" class="a"></div>
</body></html>
